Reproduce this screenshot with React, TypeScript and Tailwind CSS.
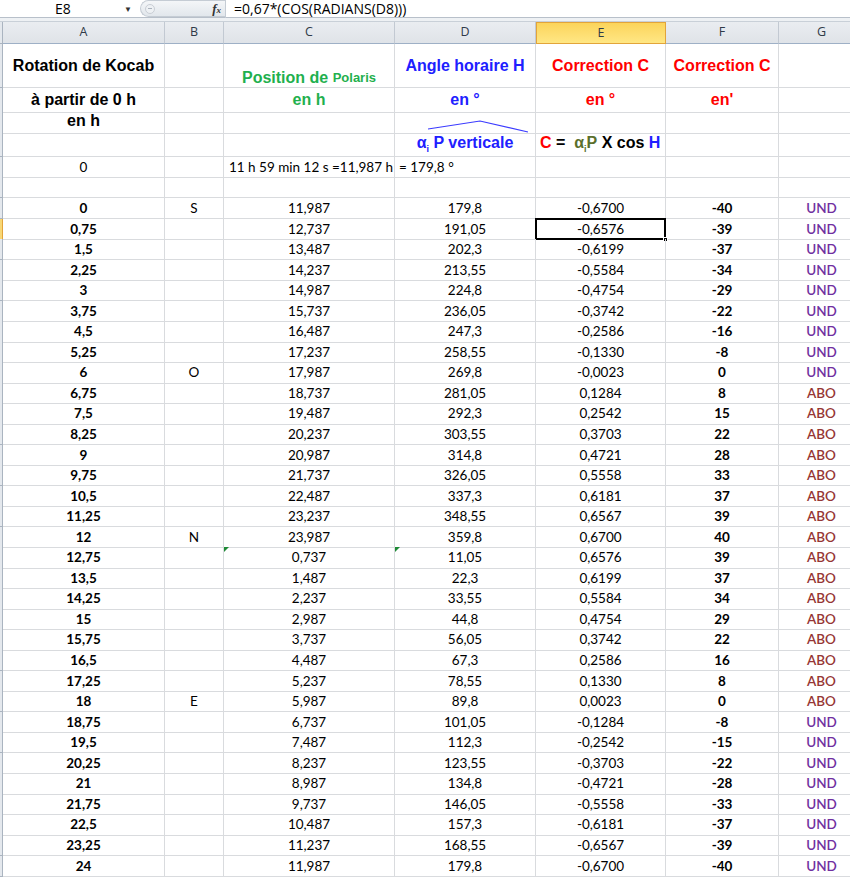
import React from "react";

const cols = "grid grid-cols-[3px_162px_59px_171px_141px_130px_113px_86px]";
const line = "border-r border-b border-[#d9dbde]";
const hdr = "font-['Liberation_Sans',Arial,sans-serif] font-bold text-[16px]";
const data = "font-['Lato','Open_Sans',sans-serif] text-[13.5px] text-black";

// A, B, C, D, E, F, G
const rows: [string, string, string, string, string, string, string][] = [
  ["0", "S", "11,987", "179,8", "-0,6700", "-40", "UND"],
  ["0,75", "", "12,737", "191,05", "-0,6576", "-39", "UND"],
  ["1,5", "", "13,487", "202,3", "-0,6199", "-37", "UND"],
  ["2,25", "", "14,237", "213,55", "-0,5584", "-34", "UND"],
  ["3", "", "14,987", "224,8", "-0,4754", "-29", "UND"],
  ["3,75", "", "15,737", "236,05", "-0,3742", "-22", "UND"],
  ["4,5", "", "16,487", "247,3", "-0,2586", "-16", "UND"],
  ["5,25", "", "17,237", "258,55", "-0,1330", "-8", "UND"],
  ["6", "O", "17,987", "269,8", "-0,0023", "0", "UND"],
  ["6,75", "", "18,737", "281,05", "0,1284", "8", "ABO"],
  ["7,5", "", "19,487", "292,3", "0,2542", "15", "ABO"],
  ["8,25", "", "20,237", "303,55", "0,3703", "22", "ABO"],
  ["9", "", "20,987", "314,8", "0,4721", "28", "ABO"],
  ["9,75", "", "21,737", "326,05", "0,5558", "33", "ABO"],
  ["10,5", "", "22,487", "337,3", "0,6181", "37", "ABO"],
  ["11,25", "", "23,237", "348,55", "0,6567", "39", "ABO"],
  ["12", "N", "23,987", "359,8", "0,6700", "40", "ABO"],
  ["12,75", "", "0,737", "11,05", "0,6576", "39", "ABO"],
  ["13,5", "", "1,487", "22,3", "0,6199", "37", "ABO"],
  ["14,25", "", "2,237", "33,55", "0,5584", "34", "ABO"],
  ["15", "", "2,987", "44,8", "0,4754", "29", "ABO"],
  ["15,75", "", "3,737", "56,05", "0,3742", "22", "ABO"],
  ["16,5", "", "4,487", "67,3", "0,2586", "16", "ABO"],
  ["17,25", "", "5,237", "78,55", "0,1330", "8", "ABO"],
  ["18", "E", "5,987", "89,8", "0,0023", "0", "ABO"],
  ["18,75", "", "6,737", "101,05", "-0,1284", "-8", "UND"],
  ["19,5", "", "7,487", "112,3", "-0,2542", "-15", "UND"],
  ["20,25", "", "8,237", "123,55", "-0,3703", "-22", "UND"],
  ["21", "", "8,987", "134,8", "-0,4721", "-28", "UND"],
  ["21,75", "", "9,737", "146,05", "-0,5558", "-33", "UND"],
  ["22,5", "", "10,487", "157,3", "-0,6181", "-37", "UND"],
  ["23,25", "", "11,237", "168,55", "-0,6567", "-39", "UND"],
  ["24", "", "11,987", "179,8", "-0,6700", "-40", "UND"],
];

const RowHead = ({ active }: { active?: boolean }) => (
  <div className={`border-r border-b ${active ? "bg-[#f8d774] border-r-[#e2a43a] border-b-[#e2a43a]" : "bg-[#e4e8ed] border-[#aab4c0]"}`} />
);

const Triangle = () => (
  <span className="absolute left-0 top-0 w-0 h-0 border-t-[5px] border-t-[#1e8a36] border-r-[5px] border-r-transparent" />
);

const Alpha = ({ color }: { color: string }) => (
  <span style={{ color }}>α<sub className="text-[9px] align-[-2px]">i</sub></span>
);

const App: React.FC = () => {
  const letters = ["A", "B", "C", "D", "E", "F", "G"];

  return (
    <div className="relative w-[850px] h-[882px] overflow-hidden bg-white">
      {/* Formula bar */}
      <div className="flex items-center h-[18px] border-b border-[#b8c0ca] bg-white font-['Open_Sans',sans-serif] text-[14px] text-black">
        <div className="w-[124px] text-center pl-[2px]">E8</div>
        <span className="text-[8px] text-[#333] w-[14px]">▼</span>
        <div className="ml-[2px] w-[85px] h-[17px] flex items-center rounded-l-full border border-r-0 border-[#c5ccd4] bg-gradient-to-b from-[#f4f6f8] to-[#e2e7ec]">
          <span className="ml-[4px] w-[10px] h-[10px] rounded-full border border-[#c9ced5] bg-[#eef1f4] flex items-center justify-center">
            <span className="block w-[4px] h-px bg-[#aab2bc]" />
          </span>
          <span className="ml-auto mr-[4px] font-['Liberation_Serif',serif] italic font-bold text-[13px] text-[#333]">
            f<span className="text-[9px]">x</span>
          </span>
        </div>
        <div className="w-px h-[18px] bg-[#c5ccd4]" />
        <div className="pl-[8px]">=0,67*(COS(RADIANS(D8)))</div>
      </div>
      <div className="h-[4px] bg-[#eef1f4] border-b border-[#c9d0d8]" />

      {/* Column headers */}
      <div className={`${cols} h-[22px] font-['Open_Sans',sans-serif] text-[12.5px] text-[#2f3a48]`}>
        <div className="bg-[#e4e8ed] border-r border-b border-[#aab4c0]" />
        {letters.map(l => (
          <div
            key={l}
            className={
              l === "E"
                ? "flex items-center justify-center bg-gradient-to-b from-[#fbd45a] to-[#ffe784] border border-[#e2a43a]"
                : "flex items-center justify-center bg-gradient-to-b from-[#eaedf1] to-[#dfe3e8] border-r border-b border-r-[#c2c9d2] border-b-[#9eb0c6]"
            }
          >
            {l}
          </div>
        ))}
      </div>

      {/* Row 1 */}
      <div className={`${cols} h-[44px] ${hdr}`}>
        <RowHead />
        <div className={`${line} flex items-center justify-center text-black`}>Rotation de Kocab</div>
        <div className={line} />
        <div className={`${line} flex items-end justify-center leading-[18px] text-[#1fb04e]`}>
          Position de&nbsp;<span className="text-[13px]">Polaris</span>
        </div>
        <div className={`${line} flex items-center justify-center text-[#2020ff]`}>Angle horaire H</div>
        <div className={`${line} flex items-center justify-center text-[#ff0000]`}>Correction C</div>
        <div className={`${line} flex items-center justify-center text-[#ff0000]`}>Correction C</div>
        <div className={line} />
      </div>

      {/* Row 2 */}
      <div className={`${cols} h-[21px] ${hdr}`}>
        <RowHead />
        <div className={`${line} flex items-center justify-center text-black`}>à partir de 0 h</div>
        <div className={line} />
        <div className={`${line} flex items-center justify-center text-[#1fb04e]`}>en h</div>
        <div className={`${line} flex items-center justify-center text-[#2020ff]`}>en °</div>
        <div className={`${line} flex items-center justify-center text-[#ff0000]`}>en °</div>
        <div className={`${line} flex items-center justify-center text-[#ff0000]`}>en'</div>
        <div className={line} />
      </div>

      {/* Row 3 */}
      <div className={`${cols} h-[22px] ${hdr}`}>
        <RowHead />
        <div className={`${line} flex items-center justify-center text-black`}>en h</div>
        <div className={line} />
        <div className={line} />
        <div className={line} />
        <div className={line} />
        <div className={line} />
        <div className={line} />
      </div>

      {/* Row 4 */}
      <div className={`${cols} h-[26px] ${hdr}`}>
        <RowHead />
        <div className={line} />
        <div className={line} />
        <div className={line} />
        <div className={`${line} flex items-end justify-center pb-[1px] text-[#2020ff]`}>
          <Alpha color="#2020ff" />&nbsp;P verticale
        </div>
        <div className={`${line} flex items-end pl-[4px] pb-[1px] whitespace-nowrap text-black`}>
          <span className="text-[#ff0000]">C</span>&nbsp;=&nbsp;&nbsp;<Alpha color="#5b6f2c" /><span className="text-[#5b6f2c]">P</span>&nbsp;X cos&nbsp;<span className="text-[#2020ff]">H</span>
        </div>
        <div className={line} />
        <div className={line} />
      </div>

      {/* Row 5 */}
      <div className={`${cols} h-[20px] ${data}`}>
        <RowHead />
        <div className={`${line} flex items-center justify-center`}>0</div>
        <div className={line} />
        <div className={`${line} flex items-center pl-[5px] whitespace-nowrap`}>11 h 59 min 12 s =11,987 h</div>
        <div className={`${line} flex items-center pl-[4px] whitespace-nowrap`}>= 179,8 °</div>
        <div className={line} />
        <div className={line} />
        <div className={line} />
      </div>

      {/* Row 6 */}
      <div className={`${cols} h-[21px]`}>
        <RowHead />
        {letters.map(l => <div key={l} className={line} />)}
      </div>

      {/* Data */}
      {rows.map((r, i) => (
        <div key={i} className={`${cols} h-[20.55px] ${data}`}>
          <RowHead active={i === 1} />
          <div className={`${line} flex items-center justify-center font-bold`}>{r[0]}</div>
          <div className={`${line} flex items-center justify-center`}>{r[1]}</div>
          <div className={`${line} relative flex items-center justify-center`}>
            {i === 17 && <Triangle />}
            {r[2]}
          </div>
          <div className={`${line} relative flex items-center justify-center`}>
            {i === 17 && <Triangle />}
            {r[3]}
          </div>
          <div className={`${line} relative flex items-center justify-center`}>
            {i === 1 && (
              <>
                <span className="absolute -left-[1px] -top-[1px] w-[131px] h-[22px] border-2 border-black" />
                <span className="absolute -right-[3px] -bottom-[3px] w-[5px] h-[5px] bg-black border border-white" />
              </>
            )}
            {r[4]}
          </div>
          <div className={`${line} flex items-center justify-center font-bold`}>{r[5]}</div>
          <div
            className={`${line} flex items-center justify-center font-semibold ${r[6] === "UND" ? "text-[#7030a0]" : "text-[#963634]"}`}
          >
            {r[6]}
          </div>
        </div>
      ))}

      {/* drawn bracket over "αi P verticale" */}
      <svg className="absolute left-0 top-0 pointer-events-none" width="850" height="882">
        <polyline points="428,129 480,121 528,132" fill="none" stroke="#3b3bff" strokeWidth="1.2" />
      </svg>
    </div>
  );
};

export default App;
